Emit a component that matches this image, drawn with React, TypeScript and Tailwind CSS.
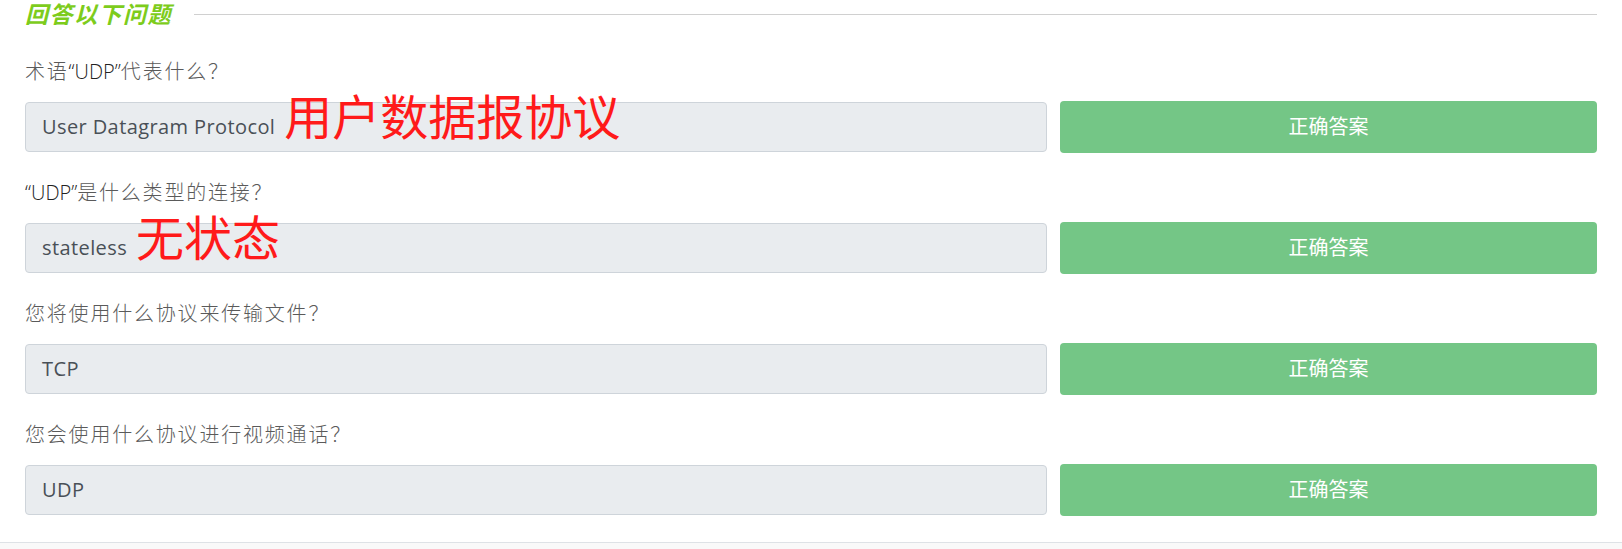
import React from 'react';

const cjk = 'font-["Open_Sans","Noto_Sans_CJK_SC",sans-serif]';

type Item = {
  question: React.ReactNode;
  answer: string;
  note?: string;
};

const items: Item[] = [
  {
    question: (
      <>
        术语<span className="text-[#222] tracking-normal">“UDP”</span>代表什么？
      </>
    ),
    answer: 'User Datagram Protocol',
    note: '用户数据报协议',
  },
  {
    question: (
      <>
        <span className="text-[#222] tracking-normal">“UDP”</span>是什么类型的连接？
      </>
    ),
    answer: 'stateless',
    note: '无状态',
  },
  { question: '您将使用什么协议来传输文件？', answer: 'TCP' },
  { question: '您会使用什么协议进行视频通话？', answer: 'UDP' },
];

const QuestionRow = ({ item }: { item: Item }) => (
  <div className="pb-[26px]">
    <p className="text-[20px] leading-[27px] tracking-[1.8px] text-[#5a5a5a] font-light mb-[16px]">{item.question}</p>
    <div className="flex items-center gap-[13px]">
      <div className="flex-1 h-[50px] flex items-center pl-[16px] bg-[#e9ecef] border border-[#ced4da] rounded-[4px] text-[20px] tracking-[0.4px] text-[#495057]">
        <span>{item.answer}</span>
        {item.note && (
          <span className="ml-[9px] text-[48px] leading-none tracking-normal text-[#ff1a1a] -translate-y-[10px]">
            {item.note}
          </span>
        )}
      </div>
      <button className="w-[537px] h-[52px] bg-[#74c686] rounded-[4px] text-white text-[20px]">
        正确答案
      </button>
    </div>
  </div>
);

export default function App() {
  return (
    <div className={`${cjk} bg-white w-[1622px] h-[549px] overflow-hidden`}>
      <div className="px-[25px]">
        <div className="flex items-center h-[28px] gap-[20px]">
          <h3 className="italic font-semibold text-[23px] leading-[28px] pr-[2px] text-[#7dcc1c] tracking-[1.5px]">回答以下问题</h3>
          <div className="flex-1 h-px bg-[#d0d0d0]" />
        </div>
        <div className="pt-[30px]">
          {items.map((item, i) => (
            <QuestionRow key={i} item={item} />
          ))}
        </div>
      </div>
      <div className="border-t border-[#dee2e6] bg-[#f9f9f9] h-[20px]" />
    </div>
  );
}
